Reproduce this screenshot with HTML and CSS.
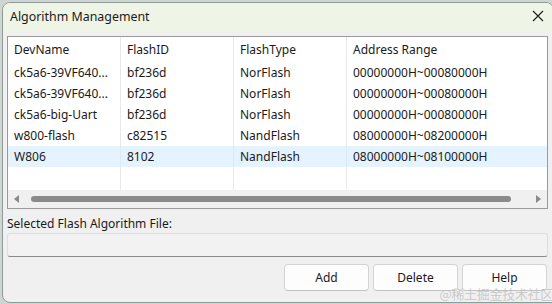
FILE: index.html
```html
<!DOCTYPE html>
<html>
<head>
<meta charset="utf-8">
<link rel="stylesheet" href="styles.css">
</head>
<body>
<div class="window">
  <div class="titlebar">
    <span class="title">Algorithm Management</span>
    <svg class="close" width="12" height="12" viewBox="0 0 12 12"><path d="M1 1 L11 11 M11 1 L1 11" stroke="#1a1a1a" stroke-width="1.1" fill="none"/></svg>
  </div>
  <div class="content">
    <div class="list">
      <div class="grid">
        <div class="row head"><div class="c">DevName</div><div class="c">FlashID</div><div class="c">FlashType</div><div class="c">Address Range</div></div>
        <div class="row"><div class="c">ck5a6-39VF640...</div><div class="c">bf236d</div><div class="c">NorFlash</div><div class="c">00000000H~00080000H</div></div>
        <div class="row"><div class="c">ck5a6-39VF640...</div><div class="c">bf236d</div><div class="c">NorFlash</div><div class="c">00000000H~00080000H</div></div>
        <div class="row"><div class="c">ck5a6-big-Uart</div><div class="c">bf236d</div><div class="c">NorFlash</div><div class="c">00000000H~00080000H</div></div>
        <div class="row"><div class="c">w800-flash</div><div class="c">c82515</div><div class="c">NandFlash</div><div class="c">08000000H~08200000H</div></div>
        <div class="row sel"><div class="c">W806</div><div class="c">8102</div><div class="c">NandFlash</div><div class="c">08000000H~08100000H</div></div>
        <div class="row empty"><div class="c"></div><div class="c"></div><div class="c"></div><div class="c"></div></div>
      </div>
      <div class="hscroll">
        <svg class="arrow" width="6" height="8" viewBox="0 0 6 8"><path d="M5 0 L0 4 L5 8 Z" fill="#8a8a8a"/></svg>
        <div class="thumb"></div>
        <svg class="arrow" width="6" height="8" viewBox="0 0 6 8"><path d="M1 0 L6 4 L1 8 Z" fill="#8a8a8a"/></svg>
      </div>
    </div>
    <div class="label">Selected Flash Algorithm File:</div>
    <div class="filebox"></div>
    <div class="buttons">
      <button class="btn">Add</button>
      <button class="btn">Delete</button>
      <button class="btn">Help</button>
    </div>
  </div>
  <div class="watermark">@稀土掘金技术社区</div>
</div>
</body>
</html>
```
FILE: styles.css
```css
html, body {
  margin: 0;
  padding: 0;
}
body {
  background: #cfd6d2;
  width: 552px;
  height: 304px;
  overflow: hidden;
  font-family: "Noto Sans", "Open Sans", sans-serif;
  font-size: 12px;
  color: #1a1a1a;
}
.window {
  position: relative;
  margin: 2px 0 0 2px;
  width: 552px;
  height: 301px;
  box-sizing: border-box;
  border: 1px solid #8f9b98;
  border-radius: 8px 8px 0 8px;
  background: #f0f0f0;
  overflow: hidden;
}
.titlebar {
  height: 29px;
  box-sizing: border-box;
  padding: 0 9px 3px 7px;
  background: #eff5e6;
  display: flex;
  align-items: center;
  justify-content: space-between;
}
.title {
  font-size: 12.4px;
  color: #1a1a1a;
}
.close {
  display: block;
}
.content {
  padding: 4px 5px 0 4px;
}
.list {
  border: 1px solid #9a9a9a;
  background: #fff;
  height: 171px;
  display: flex;
  flex-direction: column;
}
.grid {
  flex: 1;
  display: flex;
  flex-direction: column;
}
.row {
  display: grid;
  grid-template-columns: 113px 113px 113px 1fr;
  height: 21px;
  align-items: stretch;
}
.row.head {
  height: 25px;
}
.row.empty {
  flex: 1;
}
.row.sel {
  background: #e5f3ff;
}
.c {
  border-right: 1px solid #e8e8e8;
  padding-left: 6px;
  display: flex;
  align-items: center;
  white-space: nowrap;
  overflow: hidden;
}
.c:last-child {
  border-right: none;
}
.row.sel .c {
  border-right-color: #dde9f3;
}
.hscroll {
  height: 18px;
  background: #f0f0f0;
  display: flex;
  align-items: center;
  padding: 0 6px;
}
.arrow {
  display: block;
  flex: none;
}
.thumb {
  flex: none;
  width: 480px;
  margin: 0 auto 0 11px;
  height: 6px;
  border-radius: 3px;
  background: #8a8a8a;
}
.label {
  height: 15px;
  margin-top: 7px;
  line-height: 15px;
}
.filebox {
  margin-top: 2px;
  height: 22px;
  border: 1px solid #dedede;
  border-bottom-color: #8a8a8a;
  border-radius: 3px;
  background: #f2f2f2;
}
.buttons {
  display: flex;
  justify-content: flex-end;
  gap: 4px;
  margin-top: 7px;
  padding-right: 1px;
}
.btn {
  width: 85px;
  height: 27px;
  box-sizing: border-box;
  border: 1px solid #d3d3d3;
  border-bottom-color: #c2c2c2;
  border-radius: 4px;
  background: #fdfdfd;
  font-family: "Noto Sans", "Open Sans", sans-serif;
  font-size: 12px;
  color: #1a1a1a;
  padding: 0;
}
.watermark {
  position: absolute;
  right: 0;
  bottom: 0;
  font-family: "Noto Sans CJK SC", sans-serif;
  font-size: 13px;
  line-height: 16px;
  color: rgba(190, 190, 190, 0.75);
  letter-spacing: -0.3px;
}
```
